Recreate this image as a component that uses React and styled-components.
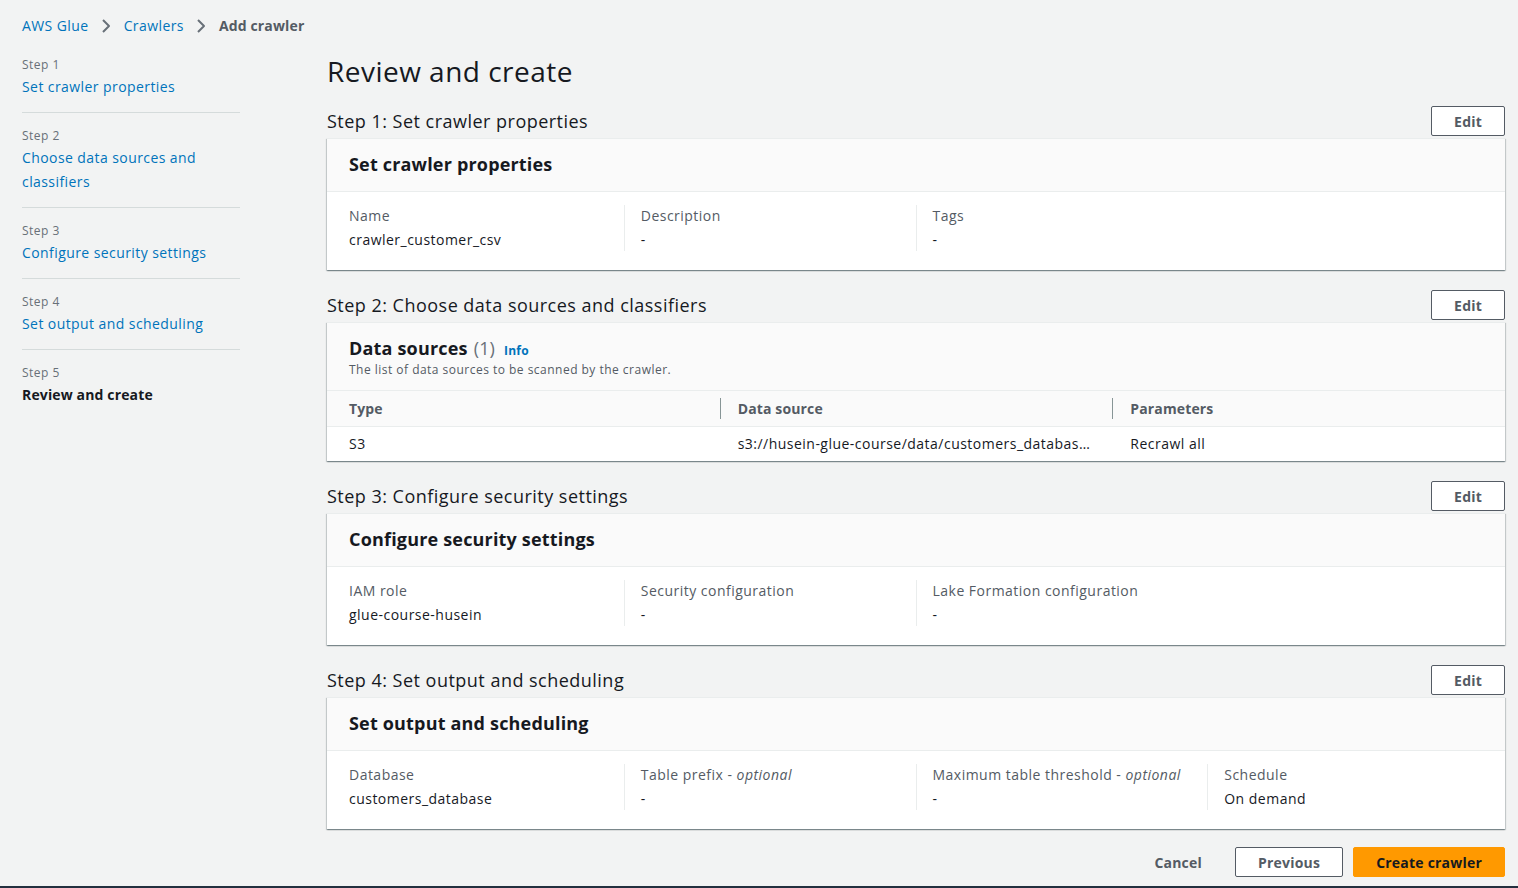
import React from "react";
import styled, { createGlobalStyle } from "styled-components";

const GlobalStyle = createGlobalStyle`
  body {
    margin: 0;
    background: #f2f3f3;
    font-family: "Open Sans", "Noto Sans", sans-serif;
    color: #16191f;
    letter-spacing: 0.03em;
    overflow: hidden;
  }
  * { box-sizing: border-box; }
`;

const Page = styled.div`
  padding: 14px 13px 9px 22px;
`;

const Crumbs = styled.nav`
  display: flex;
  align-items: center;
  gap: 10px;
  font-size: 14px;
  line-height: 24px;
`;

const Crumb = styled.span`
  color: ${(p) => (p.$current ? "#545b64" : "#0073bb")};
  font-weight: ${(p) => (p.$current ? 700 : 400)};
  letter-spacing: ${(p) => (p.$current ? "0.01em" : "0.03em")};
  margin-left: ${(p) => (p.$first ? "0" : "1px")};
`;

const Layout = styled.div`
  display: grid;
  grid-template-columns: 218px 1fr;
  column-gap: 87px;
  margin-top: 16px;
`;

const Side = styled.aside`
  padding-top: 2px;
`;

const SideStep = styled.div`
  padding: ${(p) => (p.$first ? "1px 0 13px" : "15px 0 13px")};
  border-top: ${(p) => (p.$first ? "none" : "1px solid #d5dbdb")};
`;

const StepLabel = styled.div`
  font-size: 12px;
  line-height: 16px;
  color: #687078;
`;

const StepLink = styled.div`
  margin-top: 2px;
  font-size: 14px;
  line-height: 24px;
  color: ${(p) => (p.$active ? "#16191f" : "#0073bb")};
  font-weight: ${(p) => (p.$active ? 700 : 400)};
  letter-spacing: ${(p) => (p.$active ? "0.01em" : "0.03em")};
`;

const Main = styled.main`
  display: flex;
  flex-direction: column;
`;

const Title = styled.h1`
  margin: -1px 0 17px;
  font-size: 28px;
  line-height: 36px;
  font-weight: 400;
`;

const Section = styled.section`
  margin-bottom: 20px;
`;

const SectionHead = styled.div`
  display: flex;
  align-items: center;
  justify-content: space-between;
  height: 30px;
  margin-bottom: 2px;
`;

const SectionTitle = styled.h2`
  margin: 0;
  font-size: 18px;
  line-height: 22px;
  font-weight: 400;
`;

const Button = styled.button`
  height: 30px;
  padding: 0 22px;
  border-radius: 2px;
  font-family: inherit;
  font-size: 14px;
  font-weight: 700;
  letter-spacing: 0.015em;
  cursor: pointer;
  border: 1px solid
    ${(p) => (p.$variant === "primary" ? "#ff9900" : p.$variant === "link" ? "transparent" : "#545b64")};
  background: ${(p) => (p.$variant === "primary" ? "#ff9900" : p.$variant === "link" ? "transparent" : "#fff")};
  color: ${(p) => (p.$variant === "primary" ? "#16191f" : "#545b64")};
`;

const Card = styled.div`
  background: #fff;
  border-top: 1px solid #eaeded;
  box-shadow: 0 1px 1px 0 rgba(0, 28, 36, 0.3), 1px 1px 1px 0 rgba(0, 28, 36, 0.15),
    -1px 1px 1px 0 rgba(0, 28, 36, 0.15);
`;

const CardHead = styled.div`
  background: #fafafa;
  padding: ${(p) => (p.$desc ? "14px 22px 12px" : "14px 22px 16px")};
  border-bottom: 1px solid #eaeded;
`;

const CardTitle = styled.h3`
  margin: 0;
  height: 22px;
  font-size: 18px;
  line-height: 22px;
  font-weight: 700;
  letter-spacing: 0.01em;
  display: flex;
  align-items: baseline;
`;

const Count = styled.span`
  font-weight: 400;
  color: #687078;
  margin-left: 6px;
`;

const Info = styled.span`
  font-size: 12px;
  line-height: 16px;
  font-weight: 700;
  color: #0073bb;
  margin-left: 9px;
`;

const CardDesc = styled.div`
  margin-top: 3px;
  font-size: 12px;
  line-height: 16px;
  color: #545b64;
`;

const CardBody = styled.div`
  padding: 13px 22px 19px;
  display: grid;
  grid-template-columns: repeat(4, 1fr);
  column-gap: 33px;
`;

const Field = styled.div`
  position: relative;
  min-width: 0;
  &:not(:first-child)::before {
    content: "";
    position: absolute;
    left: -17px;
    top: 0;
    bottom: 0;
    border-left: 1px solid #eaeded;
  }
`;

const Label = styled.div`
  font-size: 14px;
  line-height: 22px;
  color: #545b64;
  white-space: nowrap;
  em {
    font-style: italic;
  }
`;

const Value = styled.div`
  margin-top: 2px;
  font-size: 14px;
  line-height: 22px;
`;

const Table = styled.table`
  width: 100%;
  border-collapse: collapse;
  table-layout: fixed;
  font-size: 14px;
`;

const Th = styled.th`
  height: 35px;
  padding: 0 0 0 ${(p) => (p.$first ? "22px" : "0")};
  background: #fafafa;
  border-bottom: 1px solid #eaeded;
  text-align: left;
  font-weight: 700;
  letter-spacing: 0.01em;
  color: #545b64;
`;

const ThInner = styled.div`
  line-height: 21px;
  padding-left: ${(p) => (p.$first ? "0" : "17px")};
  border-left: ${(p) => (p.$first ? "none" : "1px solid #879596")};
`;

const Td = styled.td`
  height: 35px;
  padding: 0 ${(p) => (p.$clip ? "22px" : "0")} 0 ${(p) => (p.$first ? "22px" : "18px")};
  white-space: nowrap;
  overflow: hidden;
  text-overflow: ellipsis;
`;

const Actions = styled.div`
  display: flex;
  justify-content: flex-end;
  gap: 10px;
  margin-top: -2px;
`;

const BottomBar = styled.div`
  height: 40px;
  margin: 9px -13px 0 -22px;
  background: #232f3e;
`;

const Chevron = () => (
  <svg width="14" height="16" viewBox="0 0 14 16" fill="none">
    <path d="M4 2l6 6-6 6" stroke="#687078" strokeWidth="2" strokeLinejoin="round" />
  </svg>
);

const steps = [
  "Set crawler properties",
  "Choose data sources and classifiers",
  "Configure security settings",
  "Set output and scheduling",
  "Review and create",
];

const FieldCard = ({ title, fields }) => (
  <Card>
    <CardHead>
      <CardTitle>{title}</CardTitle>
    </CardHead>
    <CardBody>
      {fields.map(([label, opt, value]) => (
        <Field key={label}>
          <Label>
            {label}
            {opt && (
              <>
                {" - "}
                <em>optional</em>
              </>
            )}
          </Label>
          <Value>{value}</Value>
        </Field>
      ))}
    </CardBody>
  </Card>
);

const StepSection = ({ title, children }) => (
  <Section>
    <SectionHead>
      <SectionTitle>{title}</SectionTitle>
      <Button>Edit</Button>
    </SectionHead>
    {children}
  </Section>
);

const App = () => {
  return (
    <Page>
      <GlobalStyle />
      <Crumbs>
        <Crumb $first>AWS Glue</Crumb>
        <Chevron />
        <Crumb>Crawlers</Crumb>
        <Chevron />
        <Crumb $current>Add crawler</Crumb>
      </Crumbs>
      <Layout>
        <Side>
          {steps.map((s, i) => (
            <SideStep key={s} $first={i === 0}>
              <StepLabel>Step {i + 1}</StepLabel>
              <StepLink $active={i === 4}>{s}</StepLink>
            </SideStep>
          ))}
        </Side>
        <Main>
          <Title>Review and create</Title>
          <StepSection title="Step 1: Set crawler properties">
            <FieldCard
              title="Set crawler properties"
              fields={[
                ["Name", false, "crawler_customer_csv"],
                ["Description", false, "-"],
                ["Tags", false, "-"],
              ]}
            />
          </StepSection>
          <StepSection title="Step 2: Choose data sources and classifiers">
            <Card>
              <CardHead $desc>
                <CardTitle>
                  Data sources<Count>(1)</Count>
                  <Info>Info</Info>
                </CardTitle>
                <CardDesc>The list of data sources to be scanned by the crawler.</CardDesc>
              </CardHead>
              <Table>
                <thead>
                  <tr>
                    <Th $first>
                      <ThInner $first>Type</ThInner>
                    </Th>
                    <Th>
                      <ThInner>Data source</ThInner>
                    </Th>
                    <Th>
                      <ThInner>Parameters</ThInner>
                    </Th>
                  </tr>
                </thead>
                <tbody>
                  <tr>
                    <Td $first>S3</Td>
                    <Td $clip>s3://husein-glue-course/data/customers_database/customers_csv/</Td>
                    <Td>Recrawl all</Td>
                  </tr>
                </tbody>
              </Table>
            </Card>
          </StepSection>
          <StepSection title="Step 3: Configure security settings">
            <FieldCard
              title="Configure security settings"
              fields={[
                ["IAM role", false, "glue-course-husein"],
                ["Security configuration", false, "-"],
                ["Lake Formation configuration", false, "-"],
              ]}
            />
          </StepSection>
          <StepSection title="Step 4: Set output and scheduling">
            <FieldCard
              title="Set output and scheduling"
              fields={[
                ["Database", false, "customers_database"],
                ["Table prefix", true, "-"],
                ["Maximum table threshold", true, "-"],
                ["Schedule", false, "On demand"],
              ]}
            />
          </StepSection>
          <Actions>
            <Button $variant="link">Cancel</Button>
            <Button>Previous</Button>
            <Button $variant="primary">Create crawler</Button>
          </Actions>
        </Main>
      </Layout>
      <BottomBar />
    </Page>
  );
};

export default App;
